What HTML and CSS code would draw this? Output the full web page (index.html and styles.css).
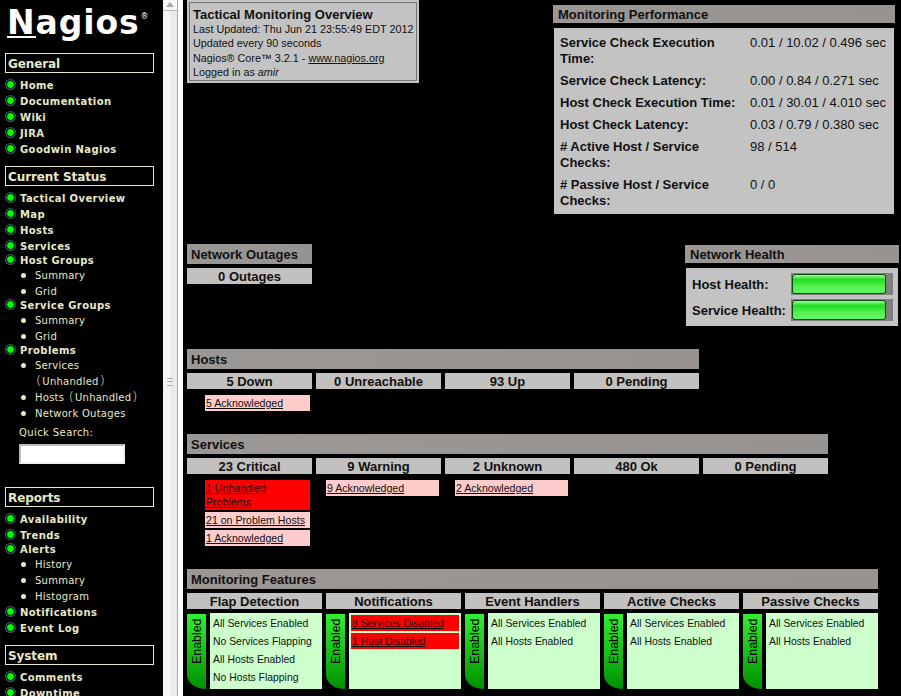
FILE: index.html
```html
<!DOCTYPE html>
<html>
  <head>
    <title>Nagios Core</title>
    <link rel="stylesheet" href="styles.css">
  </head>
  <body>
    <div class="page">
      <div class="nav">
        <div class="logo"><span class="logoN">N</span>agios<sup class="reg">®</sup></div>

        <div class="navHead">General</div>
        <div class="navItem">Home</div>
        <div class="navItem">Documentation</div>
        <div class="navItem">Wiki</div>
        <div class="navItem">JIRA</div>
        <div class="navItem">Goodwin Nagios</div>

        <div class="navHead">Current Status</div>
        <div class="navItem">Tactical Overview</div>
        <div class="navItem">Map</div>
        <div class="navItem">Hosts</div>
        <div class="navItem">Services</div>
        <div class="navItem groupItem">Host Groups</div>
        <ul class="subList">
          <li>Summary</li>
          <li>Grid</li>
        </ul>
        <div class="navItem groupItem">Service Groups</div>
        <ul class="subList">
          <li>Summary</li>
          <li>Grid</li>
        </ul>
        <div class="navItem groupItem">Problems</div>
        <ul class="subList">
          <li>Services<br><span class="paren">(</span>Unhandled<span class="paren">)</span></li>
          <li>Hosts <span class="paren">(</span>Unhandled<span class="paren">)</span></li>
          <li>Network Outages</li>
        </ul>
        <div class="searchLabel">Quick Search:</div>
        <input class="searchBox">

        <div class="navHead reportsHead">Reports</div>
        <div class="navItem">Availability</div>
        <div class="navItem">Trends</div>
        <div class="navItem groupItem">Alerts</div>
        <ul class="subList">
          <li>History</li>
          <li>Summary</li>
          <li>Histogram</li>
        </ul>
        <div class="navItem">Notifications</div>
        <div class="navItem">Event Log</div>

        <div class="navHead">System</div>
        <div class="navItem">Comments</div>
        <div class="navItem">Downtime</div>
      </div>

      <div class="scrollbar">
        <div class="scrollUp"></div>
        <div class="scrollThumb"><div class="grip"></div></div>
      </div>

      <div class="main">
        <div class="topRow">
          <div class="infoBox">
            <div class="infoTitle">Tactical Monitoring Overview</div>
            <div>Last Updated: Thu Jun 21 23:55:49 EDT 2012</div>
            <div>Updated every 90 seconds</div>
            <div>Nagios® Core™ 3.2.1 - <a href="#">www.nagios.org</a></div>
            <div>Logged in as <i>amir</i></div>
          </div>
          <div class="perf">
            <div class="title">Monitoring Performance</div>
            <div class="perfBody">
              <b>Service Check Execution Time:</b><span>0.01 / 10.02 / 0.496 sec</span>
              <b>Service Check Latency:</b><span>0.00 / 0.84 / 0.271 sec</span>
              <b>Host Check Execution Time:</b><span>0.01 / 30.01 / 4.010 sec</span>
              <b>Host Check Latency:</b><span>0.03 / 0.79 / 0.380 sec</span>
              <b># Active Host / Service Checks:</b><span>98 / 514</span>
              <b># Passive Host / Service Checks:</b><span>0 / 0</span>
            </div>
          </div>
        </div>

        <div class="midRow">
          <div class="outages">
            <div class="title">Network Outages</div>
            <div class="tile">0 Outages</div>
          </div>
          <div class="health">
            <div class="title">Network Health</div>
            <div class="healthBody">
              <b>Host Health:</b><div class="bar"><div class="barFill"></div></div>
              <b>Service Health:</b><div class="bar"><div class="barFill"></div></div>
            </div>
          </div>
        </div>

        <div class="section hosts">
          <div class="title">Hosts</div>
          <div class="tiles">
            <div>
              <div class="tile">5 Down</div>
              <div class="notes first"><a class="note pink" href="#">5 Acknowledged</a></div>
            </div>
            <div class="tile">0 Unreachable</div>
            <div class="tile">93 Up</div>
            <div class="tile">0 Pending</div>
          </div>
        </div>

        <div class="section services">
          <div class="title">Services</div>
          <div class="tiles">
            <div>
              <div class="tile">23 Critical</div>
              <div class="notes first">
                <a class="note red" href="#">1 Unhandled Problems</a>
                <a class="note pink" href="#">21 on Problem Hosts</a>
                <a class="note pink" href="#">1 Acknowledged</a>
              </div>
            </div>
            <div>
              <div class="tile">9 Warning</div>
              <div class="notes"><a class="note pink" href="#">9 Acknowledged</a></div>
            </div>
            <div>
              <div class="tile">2 Unknown</div>
              <div class="notes"><a class="note pink" href="#">2 Acknowledged</a></div>
            </div>
            <div class="tile">480 Ok</div>
            <div class="tile">0 Pending</div>
          </div>
        </div>

        <div class="section features">
          <div class="title">Monitoring Features</div>
          <div class="featureGrid">
            <div>
              <div class="tile">Flap Detection</div>
              <div class="feature">
                <div class="enabled"><span>Enabled</span></div>
                <div class="featureText">
                  <div>All Services Enabled</div>
                  <div>No Services Flapping</div>
                  <div>All Hosts Enabled</div>
                  <div>No Hosts Flapping</div>
                </div>
              </div>
            </div>
            <div>
              <div class="tile">Notifications</div>
              <div class="feature">
                <div class="enabled"><span>Enabled</span></div>
                <div class="featureText noPad">
                  <a class="disabled" href="#">8 Services Disabled</a>
                  <a class="disabled" href="#">1 Host Disabled</a>
                </div>
              </div>
            </div>
            <div>
              <div class="tile">Event Handlers</div>
              <div class="feature">
                <div class="enabled"><span>Enabled</span></div>
                <div class="featureText">
                  <div>All Services Enabled</div>
                  <div>All Hosts Enabled</div>
                </div>
              </div>
            </div>
            <div>
              <div class="tile">Active Checks</div>
              <div class="feature">
                <div class="enabled"><span>Enabled</span></div>
                <div class="featureText">
                  <div>All Services Enabled</div>
                  <div>All Hosts Enabled</div>
                </div>
              </div>
            </div>
            <div>
              <div class="tile">Passive Checks</div>
              <div class="feature">
                <div class="enabled"><span>Enabled</span></div>
                <div class="featureText">
                  <div>All Services Enabled</div>
                  <div>All Hosts Enabled</div>
                </div>
              </div>
            </div>
          </div>
        </div>
      </div>
    </div>
  </body>
</html>
```

FILE: styles.css
```css
html, body { margin: 0; height: 100%; overflow: hidden; background: #000; }
body { font-family: "Liberation Sans", Arial, sans-serif; color: #000; }
a { color: inherit; }

.page { display: flex; height: 696px; overflow: hidden; }

/* left frame */
.nav { width: 163px; flex: none; padding: 8px 0 0 5px; box-sizing: border-box; background: #000; color: #e8e8c8; font-family: "DejaVu Sans", Verdana, sans-serif; font-size: 10px; overflow: hidden; }

.logo { height: 45px; color: #fff; font-size: 33px; line-height: 30px; font-weight: bold; letter-spacing: 0.9px; white-space: nowrap; margin-left: 2px; }
.logoN { border-bottom: 2px solid #fff; display: inline-block; height: 28px; }
.reg { font-size: 8px; font-weight: normal; line-height: 0; vertical-align: 15px; letter-spacing: 0; margin-left: 1px; }

.navHead { width: 149px; height: 20px; box-sizing: border-box; border: 1px solid #e8e8c8; padding-left: 2px; font-size: 12px; line-height: 20px; font-weight: bold; letter-spacing: -0.1px; margin: 8px 0 5px; }
.navHead:nth-of-type(2) { margin-top: 0; }
.reportsHead { margin-top: 23px; }

.navItem { height: 16px; line-height: 16px; font-weight: bold; padding-left: 15px; position: relative; letter-spacing: 0.4px; white-space: nowrap; }
.navItem::before { content: ""; position: absolute; left: 1px; top: 2px; width: 7px; height: 7px; background: #0f0; border-radius: 50%; border: 1px solid #000; box-shadow: 0 0 0 1px #44506a; }
.groupItem { margin-top: -2px; }

.subList { list-style: none; margin: 0; padding: 0 0 0 14px; font-size: 10px; }
.subList li { line-height: 16px; padding-left: 16px; position: relative; letter-spacing: 0.25px; white-space: nowrap; }
.subList li:first-child { margin-top: -1px; }
.subList li::before { content: ""; position: absolute; left: 2px; top: 5px; width: 5px; height: 5px; border-radius: 50%; background: #e8e8c8; }
.paren { font-size: 13px; line-height: 10px; font-weight: 200; margin: 0 1px; }

.searchLabel { margin: 3px 0 0 14px; line-height: 16px; letter-spacing: 0.4px; }
.searchBox { display: block; width: 106px; height: 20px; box-sizing: border-box; margin: 3px 0 0 14px; padding: 0; background: #fff; border: 2px solid #bbb; border-right-color: #eee; border-bottom-color: #eee; border-radius: 0; }

/* frame scrollbar */
.scrollbar { width: 14px; flex: none; display: flex; flex-direction: column; background: #f4f3f0; border-right: 1px solid #aaa; box-sizing: content-box; }
.scrollUp { height: 10px; background: #f7f7f5; border-bottom: 1px solid #b5b5b5; position: relative; }
.scrollUp::after { content: ""; position: absolute; left: 3px; top: 2px; border: 4px solid transparent; border-top: 0; border-bottom: 5px solid #aaa; }
.scrollThumb { flex: 1; background: linear-gradient(90deg, #f6f5f3 50%, #ebebe9 50%); padding-top: 367px; }
.grip { width: 6px; height: 6px; margin-left: 4px; border-top: 1px solid #aaa; border-bottom: 1px solid #aaa; position: relative; }
.grip::after { content: ""; position: absolute; left: 0; right: 0; top: 2px; height: 1px; background: #aaa; }

/* right frame */
.main { flex: none; width: 718px; margin-left: 5px; padding-left: 4px; background: #000; font-size: 12px; box-shadow: -5px 0 0 #fff; }

.title { height: 20px; line-height: 22px; padding-left: 4px; font-size: 13px; font-weight: bold; background: linear-gradient(90deg, #9b9795, #979391); color: #111; box-sizing: border-box; }
.tile { height: 16px; line-height: 18px; background: #c3c1bf; font-size: 13px; font-weight: bold; text-align: center; color: #111; }

.topRow { display: flex; align-items: flex-start; height: 244px; }
.infoBox { width: 232px; height: 83px; box-sizing: border-box; background: #c3c3c3; border: 1px solid #c3c3c3; outline: 1px solid #777; outline-offset: -3px; padding: 6px 5px 0; line-height: 14.3px; font-size: 10.8px; color: #111; margin-right: 134px; white-space: nowrap; }
.infoTitle { font-size: 13px; font-weight: bold; line-height: 15px; }

.perf { width: 342px; margin-top: 5px; }
.perf .title { height: 18px; line-height: 20px; padding-left: 5px; }
.perfBody { display: grid; grid-template-columns: 190px auto; row-gap: 6px; margin: 5px 1px 0; padding: 7px 6px 5px; background: #c3c3c3; font-size: 13px; line-height: 16px; color: #111; }
.perfBody b { padding-right: 8px; }

.midRow { display: flex; justify-content: space-between; width: 712px; height: 105px; }
.outages { width: 125px; }
.outages .tile { margin-top: 4px; }
.health { width: 214px; margin-top: 1px; }
.health .title { height: 18px; line-height: 20px; padding-left: 5px; }
.healthBody { display: grid; grid-template-columns: 99px 102px; align-items: center; row-gap: 4px; margin: 5px 1px 0; padding: 5px 6px; background: #c3c3c3; font-size: 13px; color: #111; }
.bar { height: 22px; background: #7f7f7f; padding-right: 7px; padding-left: 1px; }
.barFill { height: 20px; margin-top: 1px; border: 1px solid #0a4a0a; border-radius: 3px; box-sizing: border-box; background: linear-gradient(#9dfa9d, #22dd22 25%, #55f055 65%, #60f860); }

.section { margin-bottom: 0; }
.tiles { display: grid; grid-auto-flow: column; grid-auto-columns: 125px; column-gap: 4px; margin-top: 4px; align-items: start; }
.hosts { width: 512px; height: 85px; }
.services { width: 641px; height: 135px; }
.features { width: 691px; }

.notes { display: flex; flex-direction: column; gap: 2px; margin: 6px 2px 0 10px; }
.notes.first { margin-left: 18px; }
.note { display: block; font-size: 10.6px; line-height: 14px; padding: 1px; min-height: 14px; color: #111; }
.pink { background: #fcc; }
.red { background: #f00; }

.featureGrid { display: grid; grid-template-columns: repeat(5, 135px); column-gap: 4px; margin-top: 4px; }
.feature { display: flex; gap: 4px; margin-top: 4px; height: 76px; }
.enabled { width: 19px; height: 75px; margin-top: 1px; flex: none; background: linear-gradient(#33ee33, #009000); border-bottom-left-radius: 19px 14px; }
.enabled span { display: block; writing-mode: vertical-rl; transform: rotate(180deg); font-size: 12.4px; line-height: 19px; height: 46px; margin: 4px 0 0 1px; text-align: left; }
.featureText { flex: 1; background: #cfc; padding: 3px 2px 0 3px; font-size: 10.4px; line-height: 16px; color: #111; white-space: nowrap; }
.featureText div { margin-bottom: 2px; }
.noPad { padding-top: 2px; padding-left: 2px; }
.disabled { display: block; background: #f00; height: 16px; line-height: 18px; margin-bottom: 2px; padding-left: 1px; }
```
